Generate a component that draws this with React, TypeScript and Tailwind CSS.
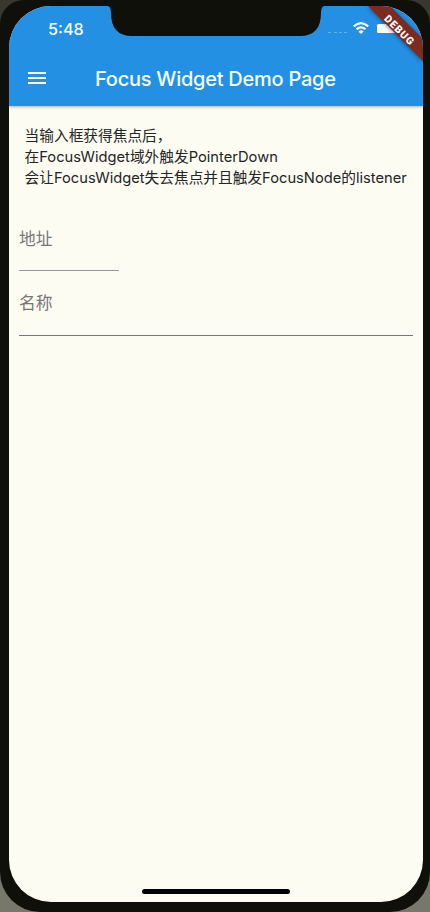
import React from "react";

function StatusIcons() {
  return (
    <svg className="absolute right-0 top-0 h-[64px] w-[104px]" viewBox="319 6 104 64">
      <g stroke="#5fb3e8" strokeWidth="1">
        <path d="M328 32.5h3M334 32.5h3M339 32.5h3M344 32.5h3" />
      </g>
      <g transform="translate(353 22)" fill="none" stroke="#fff" strokeWidth="2.1">
        <path d="M.8 4.4Q8 -2 15.2 4.4" />
        <path d="M3.5 7.3Q8 3.4 12.5 7.3" />
        <path d="M8 12L5.4 9.4Q8 7.3 10.6 9.4Z" fill="#fff" stroke="none" />
      </g>
      <rect x="377" y="24" width="20" height="9" rx="1.5" fill="#fff" />
      <path d="M368 6H390L423 39V61Z" fill="#7d2a20" className="drop-shadow-[0_1px_2px_rgba(0,0,0,0.45)]" />
      <text
        x="0"
        y="3.7"
        transform="translate(399.2 29.8) rotate(45)"
        textAnchor="middle"
        fill="#fff"
        className="font-['Roboto'] text-[10.4px] font-black"
        textLength="37"
      >
        DEBUG
      </text>
    </svg>
  );
}

function AppBar() {
  return (
    <header className="relative h-[100px] bg-[#2390e4] text-[#f5ffff] shadow-[0_1px_3px_rgba(0,0,0,0.3)]">
      <div className="flex h-[46px] items-center pl-[39px] text-[16.2px] font-medium">5:48</div>
      <div className="flex h-[52px] items-center pl-[19px]">
        <div className="flex w-[18px] flex-col gap-[3px]">
          <i className="h-[2px] bg-white" />
          <i className="h-[2px] bg-white" />
          <i className="h-[2px] bg-white" />
        </div>
        <h1 className="ml-[49px] mt-[2px] whitespace-nowrap text-[20px] font-medium tracking-[-0.25px]">
          Focus Widget Demo Page
        </h1>
      </div>
      <svg className="absolute left-[99px] top-0 h-[30px] w-[216px]" viewBox="0 0 216 30">
        <path d="M0 0Q3 1 3 7Q3 30 24 30H192Q213 30 213 7Q213 1 216 0Z" fill="#10100b" />
      </svg>
      <StatusIcons />
    </header>
  );
}

export default function App() {
  return (
    <div className="h-[912px] w-[430px] bg-linear-to-b from-[#38382e] from-50% to-[#77776c] to-50% font-['Inter','Noto_Sans_CJK_SC',sans-serif]">
      <div className="h-full rounded-t-[24px] rounded-b-[40px] bg-[#10100b] px-[9px] pb-[10px] pr-[7px] pt-[6px]">
        <div className="relative h-[896px] overflow-hidden rounded-[42px] bg-[#fcfcf2]">
          <AppBar />
          <main className="px-[10px] pt-[20px]">
            <p className="whitespace-nowrap pl-[5.6px] text-[14.7px] leading-[21px] text-[#252525]">
              当输入框获得焦点后，
              <br />
              在FocusWidget域外触发PointerDown
              <br />
              会让FocusWidget失去焦点并且触发FocusNode的listener
            </p>
            <div className="mt-[19px] h-[63px] w-[100px] border-b border-[#969696] pt-[18px] text-[16.8px] leading-[26px] text-[#777]">
              地址
            </div>
            <div className="h-[65px] border-b border-[#777] pt-[19px] text-[16.8px] leading-[26px] text-[#777]">
              名称
            </div>
          </main>
          <div className="absolute bottom-[8px] left-[133px] h-[5px] w-[148px] rounded-full bg-black" />
        </div>
      </div>
    </div>
  );
}
